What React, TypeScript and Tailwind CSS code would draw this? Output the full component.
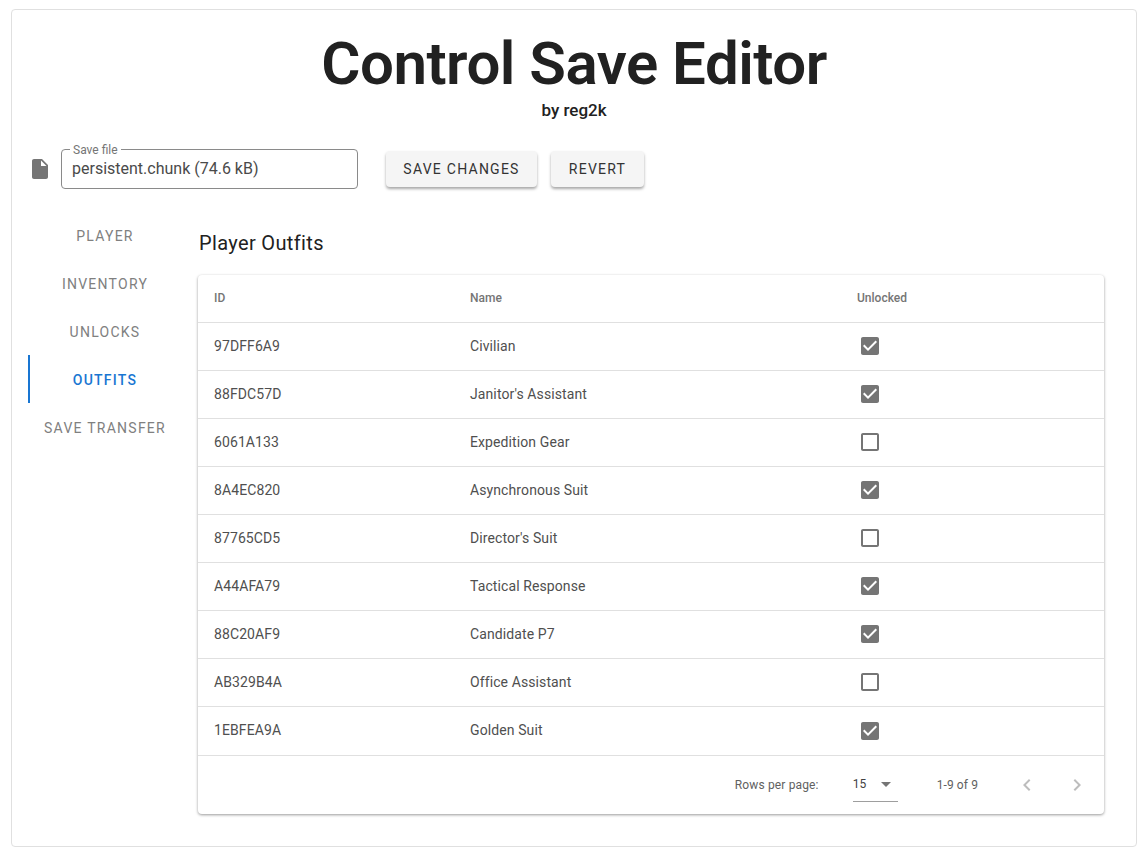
import React from 'react'

interface Outfit {
  id: string
  name: string
  unlocked: boolean
}

const outfits: Outfit[] = [
  { id: '97DFF6A9', name: 'Civilian', unlocked: true },
  { id: '88FDC57D', name: "Janitor's Assistant", unlocked: true },
  { id: '6061A133', name: 'Expedition Gear', unlocked: false },
  { id: '8A4EC820', name: 'Asynchronous Suit', unlocked: true },
  { id: '87765CD5', name: "Director's Suit", unlocked: false },
  { id: 'A44AFA79', name: 'Tactical Response', unlocked: true },
  { id: '88C20AF9', name: 'Candidate P7', unlocked: true },
  { id: 'AB329B4A', name: 'Office Assistant', unlocked: false },
  { id: '1EBFEA9A', name: 'Golden Suit', unlocked: true },
]

const tabs = ['Player', 'Inventory', 'Unlocks', 'Outfits', 'Save Transfer']

function CheckIcon({ checked }: { checked: boolean }) {
  return (
    <svg viewBox="0 0 24 24" className="w-6 h-6 fill-[#757575]">
      {checked ? (
        <path d="M19 3H5c-1.11 0-2 .9-2 2v14c0 1.1.89 2 2 2h14c1.11 0 2-.9 2-2V5c0-1.1-.89-2-2-2zm-9 14l-5-5 1.41-1.41L10 14.17l7.59-7.59L19 8l-9 9z" />
      ) : (
        <path d="M19 5v14H5V5h14m0-2H5c-1.1 0-2 .9-2 2v14c0 1.1.9 2 2 2h14c1.1 0 2-.9 2-2V5c0-1.1-.9-2-2-2z" />
      )}
    </svg>
  )
}

export default function App() {
  return (
    <div className="bg-white pt-[9px] px-[11px] pb-[11px] [font-family:Roboto,sans-serif] text-[#212121]">
      <div className="h-[838px] border border-[#e0e0e0] rounded">
        {/* Header */}
        <h1 className="mt-[21px] text-center text-[60px] leading-[66px] font-semibold tracking-[-0.5px]">
          Control Save Editor
        </h1>
        <p className="mt-[1px] text-center text-[17px] leading-6 font-medium">by reg2k</p>

        {/* Save file row */}
        <div className="mt-[27px] ml-[16px] flex items-center h-10">
          <svg viewBox="0 0 24 24" className="w-6 h-6 fill-[#757575]">
            <path d="M6 2c-1.1 0-1.99.9-1.99 2L4 20c0 1.1.89 2 1.99 2H18c1.1 0 2-.9 2-2V8l-6-6H6zm7 7V3.5L18.5 9H13z" />
          </svg>
          <div className="relative ml-[9px] w-[297px] h-10 border border-[#8a8a8a] rounded flex items-center pl-[10px] text-base text-[#4a4a4a]">
            <span className="absolute left-[8px] top-[-6px] bg-white px-[3px] text-xs leading-[12px] text-[#757575]">
              Save file
            </span>
            persistent.chunk (74.6 kB)
          </div>
          <button className="ml-[28px] w-[151px] h-9 rounded bg-[#f5f5f5] text-sm font-normal tracking-[1.25px] text-[#333333] shadow-[0_2px_3px_rgba(0,0,0,0.35)]">
            SAVE CHANGES
          </button>
          <button className="ml-[14px] w-[93px] h-9 rounded bg-[#f5f5f5] text-sm font-normal tracking-[1.25px] text-[#333333] shadow-[0_2px_3px_rgba(0,0,0,0.35)]">
            REVERT
          </button>
        </div>

        <div className="mt-[22px] ml-[16px] flex">
          {/* Side tabs */}
          <div className="w-[152px] shrink-0">
            {tabs.map((tab) => {
              const active = tab === 'Outfits'
              return (
                <div
                  key={tab}
                  className={`h-12 pt-px flex items-center justify-center uppercase text-sm tracking-[1.25px] border-l-2 ${
                    active ? 'border-[#1976d2] text-[#1976d2] font-medium' : 'border-transparent text-[#808080]'
                  }`}
                >
                  {tab}
                </div>
              )
            })}
          </div>

          {/* Outfits table */}
          <div className="ml-[18px] w-[906px]">
            <h2 className="mt-[18px] pl-px text-xl leading-[28px] font-normal tracking-[0.35px]">Player Outfits</h2>
            <div className="mt-[18px] rounded bg-white shadow-[0_1px_3px_rgba(0,0,0,0.4)]">
              <table className="w-full table-fixed text-left border-collapse">
                <thead>
                  <tr className="h-[47px] border-b border-[#e0e0e0] text-xs font-medium text-[#757575]">
                    <th className="w-[256px] pl-4 font-medium">ID</th>
                    <th className="w-[387px] pl-4 font-medium">Name</th>
                    <th className="pl-4 font-medium">Unlocked</th>
                  </tr>
                </thead>
                <tbody className="text-sm tracking-[0.1px] text-[#4f4f4f]">
                  {outfits.map((outfit, i) => (
                    <tr
                      key={outfit.id}
                      className={`border-b border-[#e0e0e0] ${i === outfits.length - 1 ? 'h-[49px]' : 'h-12'}`}
                    >
                      <td className="pl-4 pb-px">{outfit.id}</td>
                      <td className="pl-4 pb-px">{outfit.name}</td>
                      <td className="pl-4">
                        <div className="flex pl-px">
                          <CheckIcon checked={outfit.unlocked} />
                        </div>
                      </td>
                    </tr>
                  ))}
                </tbody>
              </table>

              {/* Pagination */}
              <div className="h-[58px] flex items-center justify-end text-xs text-[#616161]">
                <span className="tracking-[0.15px]">Rows per page:</span>
                <div className="ml-[34px] w-[45px] h-[34px] border-b border-[#9e9e9e] flex items-center justify-between pr-[7px] text-[#424242]">
                  <span>15</span>
                  <span className="w-0 h-0 border-x-[5px] border-x-transparent border-t-[5px] border-t-[#757575]" />
                </div>
                <span className="ml-[39px] tracking-[0.1px]">1-9 of 9</span>
                <svg viewBox="0 0 24 24" className="ml-[37px] w-6 h-6 fill-[#bdbdbd]">
                  <path d="M15.41 7.41L14 6l-6 6 6 6 1.41-1.41L10.83 12z" />
                </svg>
                <svg viewBox="0 0 24 24" className="ml-[26px] mr-[15px] w-6 h-6 fill-[#bdbdbd]">
                  <path d="M10 6L8.59 7.41 13.17 12l-4.58 4.59L10 18l6-6z" />
                </svg>
              </div>
            </div>
          </div>
        </div>
      </div>
    </div>
  )
}
